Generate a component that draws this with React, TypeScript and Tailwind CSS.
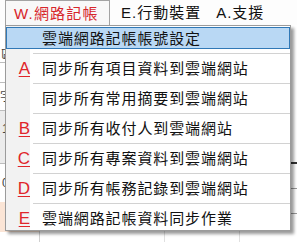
import React from 'react';

const MENU_ITEMS: { label: string; key?: string; active?: boolean }[] = [
  { label: '雲端網路記帳帳號設定', active: true },
  { label: '同步所有項目資料到雲端網站', key: 'A' },
  { label: '同步所有常用摘要到雲端網站' },
  { label: '同步所有收付人到雲端網站', key: 'B' },
  { label: '同步所有專案資料到雲端網站', key: 'C' },
  { label: '同步所有帳務記錄到雲端網站', key: 'D' },
  { label: '雲端網路記帳資料同步作業', key: 'E' },
];

const FONT = { fontFamily: '"Liberation Sans", "Noto Sans CJK TC", sans-serif' };

const MenuRow: React.FC<{ label: string; hotkey?: string; active?: boolean }> = ({ label, hotkey, active }) => (
  <div
    className={`h-[22px] flex items-center ${active ? 'border border-[#3078b6] bg-[#b9d8f4]' : 'border border-transparent'}`}
  >
    <div className="w-[23px] flex justify-end">
      {hotkey && <span className="text-[17px] leading-none text-[#e0242a] underline underline-offset-2">{hotkey}</span>}
    </div>
    <span className="pl-[12px] text-[15px] leading-none tracking-[0.9px] text-[#111]">{label}</span>
  </div>
);

const Separator = () => (
  <div className="h-[8px] flex items-center pl-[27px]">
    <div className="h-px w-full bg-[#d2d2d2]" />
  </div>
);

export default function App() {
  return (
    <div className="relative w-[297px] h-[242px] overflow-hidden bg-white" style={FONT}>
      {/* menu bar */}
      <div className="h-[25px] flex items-end bg-[#fdfdfd]">
        <div className="ml-[5px] w-[105px] h-[25px] flex items-center pl-[8px] border-l border-t border-r border-[#a3a3a3] bg-[#f8f8f8]">
          <span className="text-[15px] leading-none tracking-[1.2px] text-[#d7262b]">W.網路記帳</span>
        </div>
        <div className="h-[25px] flex items-center pl-[11px]">
          <span className="text-[15px] leading-none tracking-[1px] text-[#111]">E.行動裝置</span>
        </div>
        <div className="h-[25px] flex items-center pl-[15px]">
          <span className="text-[15px] leading-none tracking-[1px] text-[#111]">A.支援</span>
        </div>
      </div>

      {/* window content behind the menu */}
      <div className="flex h-[217px]">
        <div className="w-[40px] flex flex-col border-r border-[#d0d0d0]">
          <div className="h-[24px]" />
          <div className="h-[14px] border-b border-[#bdbdbd] text-[12px] leading-none text-[#444] pl-[1px]">區</div>
          <div className="h-[20px] border-b border-[#bdbdbd]" />
          <div className="h-[28px] border-b border-[#bdbdbd] text-[12px] leading-[28px] text-[#444]">字</div>
          <div className="h-[53px] border-b border-[#bdbdbd] bg-[#ececec] text-[12px] leading-[36px] text-[#444] pl-[2px]">1</div>
          <div className="h-[38px] text-[12px] leading-[38px] text-[#444] pl-[2px]">0</div>
          <div className="h-[30px] bg-[#fbe5d6]" />
          <div className="flex-1" />
        </div>
        <div className="w-[125px] border-r border-[#e0e0e0]" />
        <div className="w-[75px] border-r border-[#e0e0e0]" />
        <div className="flex-1 flex flex-col items-end">
          <div className="h-[137px]" />
          <div className="w-[6px] h-[2px] bg-[#333]" />
          <div className="h-[24px]" />
          <div className="w-[6px] h-px bg-[#9a9a9a]" />
          <div className="h-[24px]" />
          <div className="w-[6px] h-px bg-[#9a9a9a]" />
        </div>
      </div>

      {/* dropdown menu */}
      <div className="absolute left-[5px] top-[25px] w-[286px] border border-[#9b9b9b] py-[1px] bg-[linear-gradient(to_right,#f2f2f2_24px,#ffffff_24px)] shadow-[3px_3px_3px_rgba(0,0,0,0.4)]">
        {MENU_ITEMS.map((item, i) => (
          <React.Fragment key={item.label}>
            {i > 0 && <Separator />}
            <MenuRow label={item.label} hotkey={item.key} active={item.active} />
          </React.Fragment>
        ))}
      </div>
    </div>
  );
}
